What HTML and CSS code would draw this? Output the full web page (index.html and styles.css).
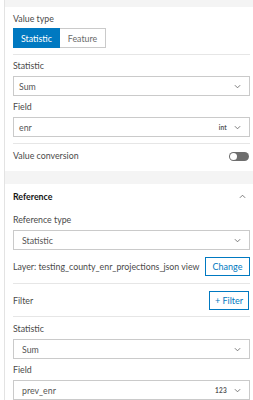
FILE: index.html
```html
<!DOCTYPE html>
<html lang="en">
<head>
    <meta charset="UTF-8">
    <meta name="viewport" content="width=device-width, initial-scale=1.0">
    <title>Value settings</title>
    <link rel="stylesheet" href="styles.css">
</head>
<body>
    <div class="panel">
        <div class="band band-top"></div>

        <div class="section">
            <div class="group group-first">
                <div class="label">Value type</div>
                <div class="segmented">
                    <span class="seg seg-active">Statistic</span>
                    <span class="seg">Feature</span>
                </div>
            </div>

            <div class="group">
                <div class="label">Statistic</div>
                <div class="select">
                    <span class="select-text">Sum</span>
                    <svg class="chevron" viewBox="0 0 8 5"><path d="M1 1l3 3 3-3" /></svg>
                </div>
                <div class="label">Field</div>
                <div class="select select-last">
                    <span class="select-text">enr</span>
                    <span class="type-icon">int</span>
                    <svg class="chevron" viewBox="0 0 8 5"><path d="M1 1l3 3 3-3" /></svg>
                </div>
            </div>

            <div class="row row-toggle">
                <span class="label-inline">Value conversion</span>
                <span class="toggle"><span class="knob"></span></span>
            </div>
        </div>

        <div class="band band-mid"></div>

        <div class="section section-ref">
            <div class="group group-first">
                <div class="heading-row">
                    <span class="heading">Reference</span>
                    <svg class="chevron chevron-up" viewBox="0 0 8 5"><path d="M1 4l3-3 3 3" /></svg>
                </div>
                <div class="label">Reference type</div>
                <div class="select select-wide">
                    <span class="select-text">Statistic</span>
                    <svg class="chevron" viewBox="0 0 8 5"><path d="M1 1l3 3 3-3" /></svg>
                </div>
                <div class="row row-layer">
                    <span class="label-inline">Layer: testing_county_enr_projections_json view</span>
                    <button class="btn-outline btn-change">Change</button>
                </div>
            </div>

            <div class="group">
                <div class="row row-filter">
                    <span class="label-inline">Filter</span>
                    <button class="btn-outline btn-filter">+ Filter</button>
                </div>
            </div>

            <div class="group group-last">
                <div class="label">Statistic</div>
                <div class="select select-wide">
                    <span class="select-text">Sum</span>
                    <svg class="chevron" viewBox="0 0 8 5"><path d="M1 1l3 3 3-3" /></svg>
                </div>
                <div class="label">Field</div>
                <div class="select select-wide">
                    <span class="select-text">prev_enr</span>
                    <span class="type-icon">123</span>
                    <svg class="chevron" viewBox="0 0 8 5"><path d="M1 1l3 3 3-3" /></svg>
                </div>
            </div>
        </div>
    </div>
</body>
</html>
```

FILE: styles.css
```css
body {
    margin: 0;
    font-family: 'Lato', 'Liberation Sans', sans-serif;
    font-size: 8.8px;
    color: #4a4a4a;
    background-color: #ffffff;
    overflow: hidden;
}

.panel {
    margin-left: 4px;
    border-left: 1px solid #e3e3e3;
    background-color: #f4f4f4;
    height: 400px;
}

.band-top {
    height: 7px;
}

.band-mid {
    height: 13px;
}

.section {
    background-color: #ffffff;
    padding: 0 3px 0 8px;
}

.group {
    border-top: 1px solid #e6e6e6;
    padding: 5px 0 6px;
}

.group-first {
    border-top: none;
    padding: 6px 0 6px;
}

.label {
    line-height: 12px;
    margin-bottom: 4px;
}

.label-inline {
    line-height: 12px;
}

/* Переключатель Statistic / Feature */
.segmented {
    display: inline-flex;
    border: 1px solid #cacaca;
    height: 18px;
    margin-top: -1px;
}

.seg {
    display: flex;
    align-items: center;
    justify-content: center;
    width: 45px;
    color: #6a6a6a;
}

.seg-active {
    background-color: #0079c1;
    color: #ffffff;
    margin: -1px 0 -1px -1px;
    border: 1px solid #0079c1;
}

.select {
    display: flex;
    align-items: center;
    height: 18px;
    border: 1px solid #cacaca;
    padding: 0 8px 0 5px;
    margin-bottom: 5px;
    color: #555;
}

.select-last {
    margin-bottom: 0;
}

.select-wide {
    padding-left: 8px;
}

.select-text {
    flex: 1;
}

.type-icon {
    font-size: 6.5px;
    font-weight: bold;
    color: #555;
    margin-right: 7px;
    letter-spacing: 0.2px;
}

.chevron {
    width: 7px;
    height: 5px;
    fill: none;
    stroke: #6a6a6a;
    stroke-width: 1;
}

.row {
    display: flex;
    align-items: center;
    justify-content: space-between;
}

.row-toggle {
    border-top: 1px solid #e6e6e6;
    padding: 6px 0 9px;
}

.toggle {
    width: 20px;
    height: 9px;
    border-radius: 5px;
    background-color: #6e6e6e;
    position: relative;
    margin-right: 1px;
}

.knob {
    position: absolute;
    left: 1px;
    top: 1px;
    width: 7px;
    height: 7px;
    border-radius: 50%;
    background-color: #ffffff;
}

.heading-row {
    display: flex;
    align-items: center;
    justify-content: space-between;
    height: 12px;
    margin-bottom: 12px;
}

.heading {
    font-weight: bold;
    color: #151515;
}

.chevron-up {
    margin-right: 4px;
}

.row-layer {
    margin-top: 7px;
    margin-bottom: 1px;
}

.btn-outline {
    font-family: inherit;
    font-size: 9px;
    background-color: #ffffff;
    border: 1px solid #0079c1;
    color: #0079c1;
    padding: 0;
    height: 19px;
}

.btn-change {
    width: 45px;
}

.btn-filter {
    width: 40px;
    margin-right: 1px;
}

.row-filter {
    padding-top: 2px;
}

.group-last {
    padding-top: 6px;
}
```
